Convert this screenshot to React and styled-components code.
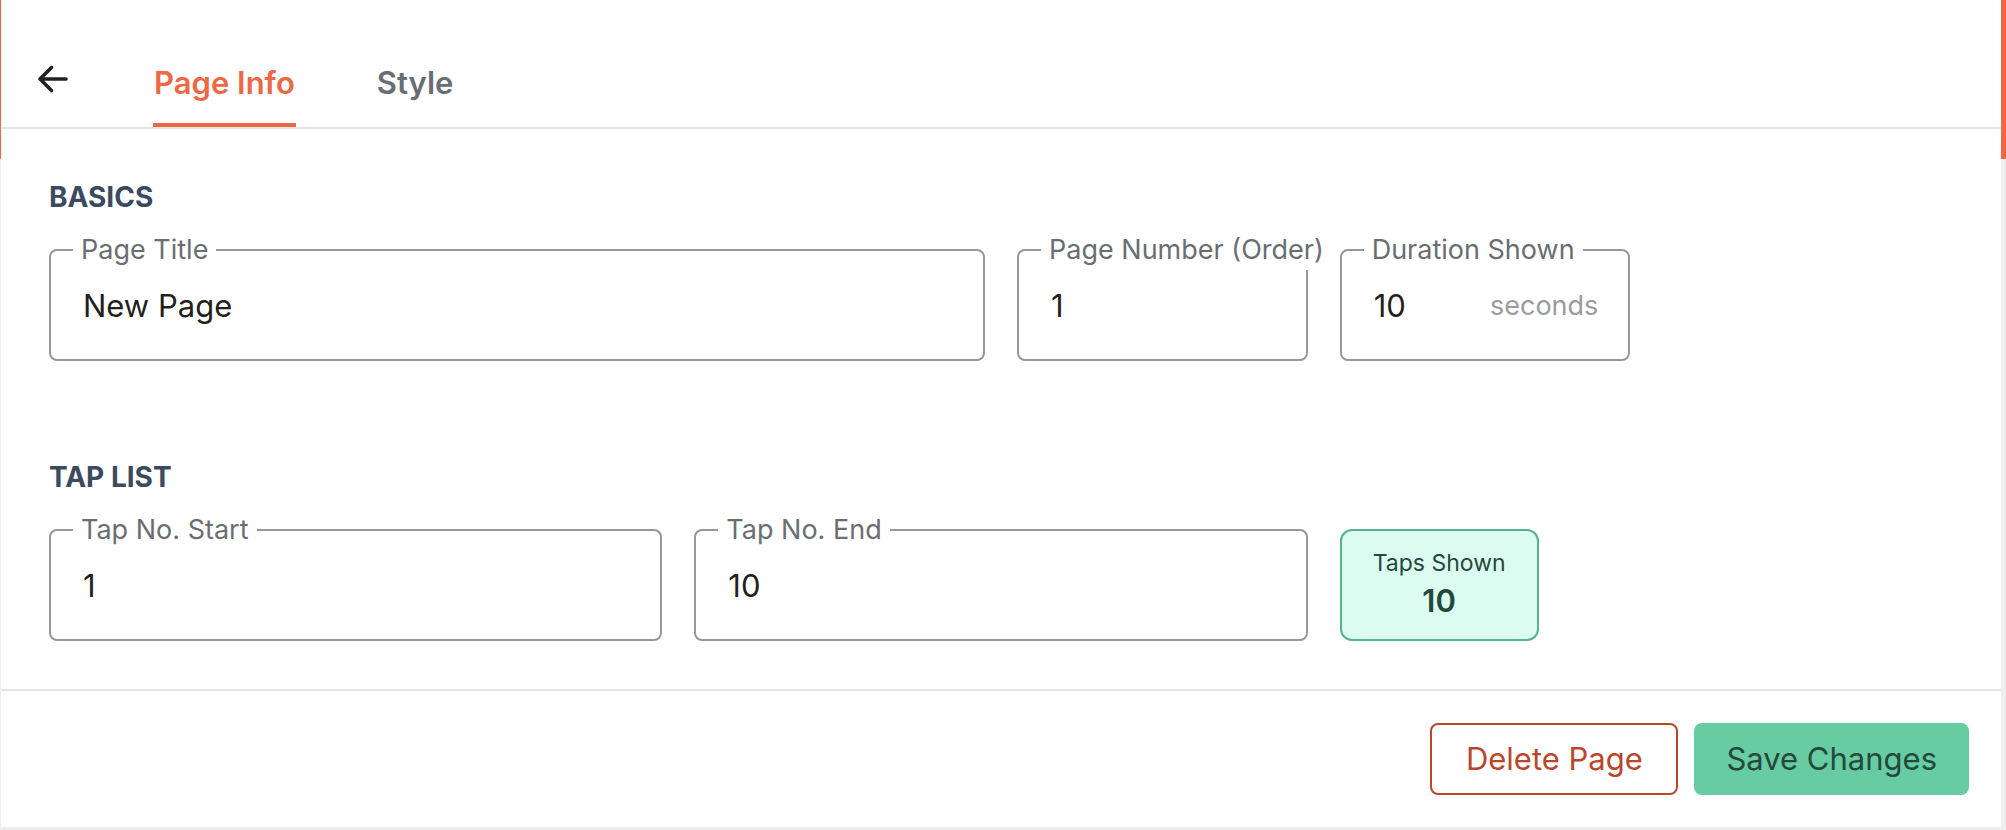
import React, { useState } from 'react';
import styled, { createGlobalStyle, css } from 'styled-components';

const GlobalStyle = createGlobalStyle`
  *, *::before, *::after { box-sizing: border-box; }
  body {
    margin: 0;
    background: #eeeeee;
    color: #231f20;
    font-family: 'Inter', 'Liberation Sans', sans-serif;
    font-size: 31px;
  }
  button, input { font: inherit; color: inherit; }
`;

const Shell = styled.div`
  padding: 0 5px 3px 1px;
  background: linear-gradient(#ed6844 159px, #eeeeee 159px);
`;

const Panel = styled.form`
  background: #ffffff;
`;

const Header = styled.header`
  display: flex;
  align-items: flex-start;
  gap: 76px;
  padding: 55px 28px 0;
  border-bottom: 2px solid #e5e6ea;
`;

const BackButton = styled.button`
  display: grid;
  place-items: center;
  width: 48px;
  height: 48px;
  padding: 0;
  border: 0;
  background: none;
  color: #222222;
  cursor: pointer;
`;

const Tabs = styled.nav`
  display: flex;
  gap: 80px;
  padding-top: 8px;
`;

const Tab = styled.a`
  padding: 0 1px 20px;
  border-bottom: 4px solid ${(p) => (p.$active ? '#ed6844' : 'transparent')};
  color: ${(p) => (p.$active ? '#ed6844' : '#6a6e72')};
  font-weight: 600;
  line-height: 40px;
  text-decoration: none;
`;

const Body = styled.main`
  display: flex;
  flex-direction: column;
  gap: 96px;
  padding: 48px;
`;

const Heading = styled.h2`
  margin: 0 0 32px;
  color: #3b4a5e;
  font-size: 28px;
  font-weight: 700;
  line-height: 40px;
`;

const Grid = styled.div`
  display: grid;
  grid-template-columns: repeat(12, minmax(0, 1fr));
  gap: 32px;
`;

const FieldBox = styled.div`
  position: relative;
  display: flex;
  align-items: center;
  grid-column: span ${(p) => p.$span};
  height: 112px;
  padding: 0 30px;
  border: 2px solid #95989b;
  border-radius: 8px;
`;

const FieldLabel = styled.label`
  position: absolute;
  top: -21px;
  left: 22px;
  padding: 0 8px;
  background: #ffffff;
  color: #6a6e72;
  font-size: 27px;
  line-height: 40px;
  white-space: nowrap;
`;

const FieldInput = styled.input`
  flex: 1;
  min-width: 0;
  height: 100%;
  padding: 0 2px;
  border: 0;
  outline: 0;
  background: none;
`;

const Unit = styled.span`
  color: #999c9f;
  font-size: 27px;
`;

const Summary = styled.output`
  justify-self: start;
  grid-column: span 2;
  padding: 14px 31px 12px;
  border: 2px solid #58b38a;
  border-radius: 12px;
  background: #dcfcf1;
  color: #24493b;
  text-align: center;
  white-space: nowrap;
`;

const SummaryLabel = styled.span`
  display: block;
  font-size: 23px;
  line-height: 36px;
`;

const SummaryValue = styled.strong`
  display: block;
  font-weight: 600;
  line-height: 40px;
`;

const Footer = styled.footer`
  display: flex;
  justify-content: flex-end;
  gap: 16px;
  padding: 32px;
  border-top: 2px solid #e5e6ea;
`;

const Button = styled.button`
  min-width: 248px;
  height: 72px;
  padding: 0 32px 2px;
  border-radius: 8px;
  cursor: pointer;
  ${(p) =>
    p.$primary
      ? css`
          border: 0;
          background: #67cca1;
          color: #24493b;
        `
      : css`
          border: 2px solid #ba472b;
          background: #ffffff;
          color: #ba472b;
        `}
`;

function Field({ id, label, span, unit, value, onChange, numeric }) {
  return (
    <FieldBox $span={span}>
      <FieldLabel htmlFor={id}>{label}</FieldLabel>
      <FieldInput
        id={id}
        type="text"
        inputMode={numeric ? 'numeric' : 'text'}
        value={value}
        onChange={(e) => onChange(id, e.target.value)}
      />
      {unit && <Unit>{unit}</Unit>}
    </FieldBox>
  );
}

function ArrowLeft() {
  return (
    <svg width="32" height="32" viewBox="0 0 32 32" fill="none" stroke="currentColor" strokeWidth="3.6" strokeLinecap="round" strokeLinejoin="round" aria-hidden="true">
      <path d="M29 16H3M14.5 4.5 3 16l11.5 11.5" />
    </svg>
  );
}

export default function App() {
  const [page, setPage] = useState({ title: 'New Page', order: '1', duration: '10', start: '1', end: '10' });
  const update = (key, value) => setPage((prev) => ({ ...prev, [key]: value }));
  const shown = Math.max(0, Number(page.end) - Number(page.start) + 1) || 0;

  return (
    <>
      <GlobalStyle />
      <Shell>
        <Panel onSubmit={(e) => e.preventDefault()}>
          <Header>
            <BackButton type="button" aria-label="Back">
              <ArrowLeft />
            </BackButton>
            <Tabs>
              <Tab href="#info" $active aria-current="page">Page Info</Tab>
              <Tab href="#style">Style</Tab>
            </Tabs>
          </Header>
          <Body>
            <section>
              <Heading>BASICS</Heading>
              <Grid>
                <Field id="title" label="Page Title" span={6} value={page.title} onChange={update} />
                <Field id="order" label="Page Number (Order)" span={2} numeric value={page.order} onChange={update} />
                <Field id="duration" label="Duration Shown" span={2} numeric unit="seconds" value={page.duration} onChange={update} />
              </Grid>
            </section>
            <section>
              <Heading>TAP LIST</Heading>
              <Grid>
                <Field id="start" label="Tap No. Start" span={4} numeric value={page.start} onChange={update} />
                <Field id="end" label="Tap No. End" span={4} numeric value={page.end} onChange={update} />
                <Summary htmlFor="start end">
                  <SummaryLabel>Taps Shown</SummaryLabel>
                  <SummaryValue>{shown}</SummaryValue>
                </Summary>
              </Grid>
            </section>
          </Body>
          <Footer>
            <Button type="button">Delete Page</Button>
            <Button type="submit" $primary>Save Changes</Button>
          </Footer>
        </Panel>
      </Shell>
    </>
  );
}
